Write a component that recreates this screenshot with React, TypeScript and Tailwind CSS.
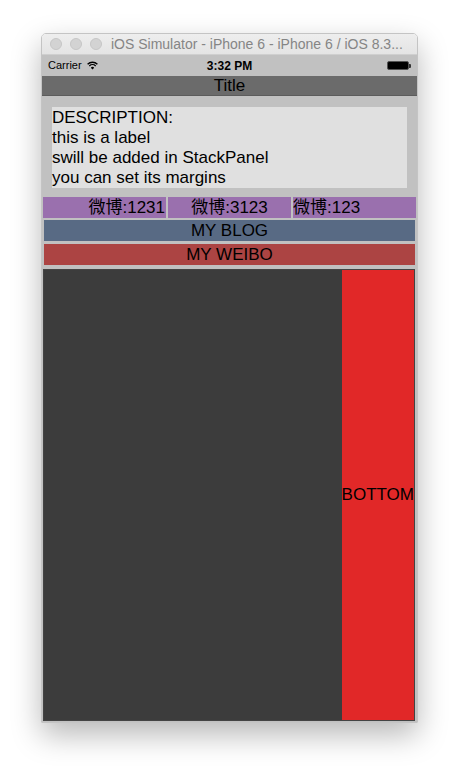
export default function App() {
  return (
    <div
      className="w-[459px] h-[773px] bg-white pt-[33px] pl-[41px]"
      style={{ fontFamily: '"Liberation Sans", "Noto Sans CJK SC", sans-serif' }}
    >
      <div className="w-[377px] rounded-t-[5px] border border-[#c4c4c4] overflow-hidden shadow-[0_12px_30px_rgba(0,0,0,0.28)]">
        {/* window title bar */}
        <div className="relative flex items-center h-[21px] bg-gradient-to-b from-[#eeeeee] to-[#e4e4e4] border-b border-[#cfcfcf]">
          <div className="flex items-center gap-[8px] pl-[8px]">
            <span className="w-[12px] h-[12px] rounded-full bg-[#d3d3d3] border border-[#c6c6c6]" />
            <span className="w-[12px] h-[12px] rounded-full bg-[#d3d3d3] border border-[#c6c6c6]" />
            <span className="w-[12px] h-[12px] rounded-full bg-[#d3d3d3] border border-[#c6c6c6]" />
          </div>
          <span className="ml-[9px] text-[14px] text-[#858585] whitespace-nowrap">
            iOS Simulator - iPhone 6 - iPhone 6 / iOS 8.3...
          </span>
        </div>

        {/* phone screen */}
        <div className="flex flex-col w-[375px] h-[667px] bg-[#c1c1c1] text-black">
          {/* status bar */}
          <div className="relative flex items-center h-[21px] px-[6px] text-[11px]">
            <span>Carrier</span>
            <svg width="11" height="9" viewBox="0 0 11 9" className="ml-[5px]">
              <path d="M0.6 3.2 A7 7 0 0 1 10.4 3.2" stroke="black" strokeWidth="1.4" fill="none" />
              <path d="M2.3 4.9 A4.6 4.6 0 0 1 8.7 4.9" stroke="black" strokeWidth="1.4" fill="none" />
              <path d="M5.5 8.6 L3.8 6.7 A2.4 2.4 0 0 1 7.2 6.7 Z" fill="black" />
            </svg>
            <span className="absolute left-0 right-0 text-center text-[12px] font-semibold">3:32 PM</span>
            <div className="ml-auto flex items-center">
              <div className="w-[22px] h-[9px] rounded-[2px] bg-black border border-[#555]" />
              <div className="w-[2px] h-[4px] bg-[#333] rounded-r-[1px]" />
            </div>
          </div>

          {/* title */}
          <div className="flex items-center justify-center h-[20px] bg-[#6b6b6b] border-b border-[#5c5c5c] text-[17px] leading-[20px] pt-[1px]">
            Title
          </div>

          {/* description */}
          <div className="mt-[11px] mx-[10px] h-[81px] pt-[1px] bg-[#e0e0e0] text-[17px] leading-[20px]">
            <div>DESCRIPTION:</div>
            <div>this is a label</div>
            <div>swill be added in StackPanel</div>
            <div>you can set its margins</div>
          </div>

          {/* weibo row */}
          <div className="grid grid-cols-3 gap-[2px] mt-[9px] px-[1px] h-[21px] text-[17px] leading-[21px]">
            <div className="bg-[#9a70ae] text-right pr-[1px]">微博:1231</div>
            <div className="bg-[#9a70ae] text-center">微博:3123</div>
            <div className="bg-[#9a70ae] text-left">微博:123</div>
          </div>

          <div className="mt-[2px] mx-[2px] h-[21px] bg-[#586a84] text-center text-[17px] leading-[21px]">
            MY BLOG
          </div>

          <div className="mt-[3px] mx-[2px] h-[21px] bg-[#ac4443] text-center text-[17px] leading-[21px]">
            MY WEIBO
          </div>

          {/* bottom area */}
          <div className="flex flex-1 mt-[4px] ml-[1px] mr-[2px] mb-[1px] bg-[#3c3c3c] border border-[#444444]">
            <div className="flex-1" />
            <div className="flex items-center bg-[#e12828] text-[17px]">BOTTOM</div>
          </div>
        </div>
      </div>
    </div>
  );
}
